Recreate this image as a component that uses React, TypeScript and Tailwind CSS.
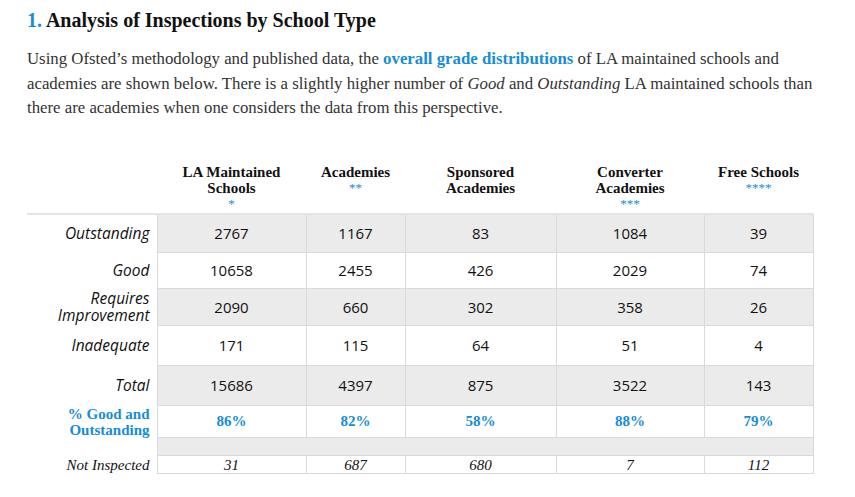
const serif = "font-['Liberation_Serif','Times_New_Roman',serif]";
const sans = "font-['Open_Sans','Noto_Sans',sans-serif]";

type Row = {
  label: string[];
  values: string[];
  shade: boolean;
  height: string;
};

const rows: Row[] = [
  { label: ["Outstanding"], values: ["2767", "1167", "83", "1084", "39"], shade: true, height: "h-[39px]" },
  { label: ["Good"], values: ["10658", "2455", "426", "2029", "74"], shade: false, height: "h-[36px]" },
  { label: ["Requires", "Improvement"], values: ["2090", "660", "302", "358", "26"], shade: true, height: "h-[37px]" },
  { label: ["Inadequate"], values: ["171", "115", "64", "51", "4"], shade: false, height: "h-[40px]" },
  { label: ["Total"], values: ["15686", "4397", "875", "3522", "143"], shade: true, height: "h-[40px]" },
];

const headers: { lines: string[]; stars: string }[] = [
  { lines: ["LA Maintained", "Schools"], stars: "*" },
  { lines: ["Academies"], stars: "**" },
  { lines: ["Sponsored", "Academies"], stars: "" },
  { lines: ["Converter", "Academies"], stars: "***" },
  { lines: ["Free Schools"], stars: "****" },
];

const cell = "border border-[#dadada] text-center align-middle";

export default function App() {
  return (
    <div className="min-h-[497px] w-[855px] bg-white pl-[27px] pt-[6px] text-[#222]">
      <h2 className={`${serif} text-[20px] font-bold leading-[28px] text-[#111]`}>
        <span className="text-[#168dd9]">1.</span> Analysis of Inspections by School Type
      </h2>
      <p className={`${serif} mt-[13px] whitespace-nowrap text-[16.8px] leading-[24.5px] text-[#333]`}>
        Using Ofsted’s methodology and published data, the{" "}
        <span className="font-bold text-[#168dd9]">overall grade distributions</span> of LA maintained schools and
        <br />
        academies are shown below. There is a slightly higher number of <em>Good</em> and <em>Outstanding</em> LA
        maintained schools than
        <br />
        there are academies when one considers the data from this perspective.
      </p>

      <table className="mt-[40px] w-[786px] table-fixed border-collapse">
        <colgroup>
          <col className="w-[130px]" />
          <col className="w-[149px]" />
          <col className="w-[99px]" />
          <col className="w-[151px]" />
          <col className="w-[148px]" />
          <col className="w-[109px]" />
        </colgroup>
        <thead>
          <tr className="h-[53px] border-b-2 border-[#e4e4e4]">
            <th />
            {headers.map((h) => (
              <th key={h.lines[0]} className={`${serif} pt-[3px] align-top text-[15px] font-bold leading-[16px] text-[#111]`}>
                {h.lines.map((line) => (
                  <div key={line}>{line}</div>
                ))}
                {h.stars ? <div className="text-[13px] font-normal leading-[16px] text-[#168dd9]">{h.stars}</div> : null}
              </th>
            ))}
          </tr>
        </thead>
        <tbody>
          {rows.map((row) => (
            <tr key={row.label.join(" ")} className={row.height}>
              <td className={`${sans} pr-[7px] text-right align-middle text-[15.5px] italic leading-[17px] text-[#111]`}>
                {row.label.map((line) => (
                  <div key={line}>{line}</div>
                ))}
              </td>
              {row.values.map((value, i) => (
                <td
                  key={i}
                  className={`${cell} ${sans} text-[15px] text-[#111] ${row.shade ? "bg-[#ebebeb]" : "bg-white"}`}
                >
                  {value}
                </td>
              ))}
            </tr>
          ))}
          <tr className="h-[32px]">
            <td className={`${serif} pr-[7px] text-right align-middle text-[15px] font-bold leading-[16px] text-[#168dd9]`}>
              <div>% Good and</div>
              <div>Outstanding</div>
            </td>
            {["86%", "82%", "58%", "88%", "79%"].map((value) => (
              <td key={value} className={`${cell} ${serif} bg-white text-[15px] font-bold text-[#168dd9]`}>
                {value}
              </td>
            ))}
          </tr>
          <tr className="h-[18px]">
            <td />
            <td colSpan={5} className={`${cell} bg-[#ebebeb]`} />
          </tr>
          <tr className="h-[18px]">
            <td className={`${serif} pr-[7px] text-right align-middle text-[15px] italic leading-[16px] text-[#111]`}>
              Not Inspected
            </td>
            {["31", "687", "680", "7", "112"].map((value) => (
              <td key={value} className={`${cell} ${serif} bg-white text-[15px] italic leading-[16px] text-[#111]`}>
                {value}
              </td>
            ))}
          </tr>
        </tbody>
      </table>
    </div>
  );
}
